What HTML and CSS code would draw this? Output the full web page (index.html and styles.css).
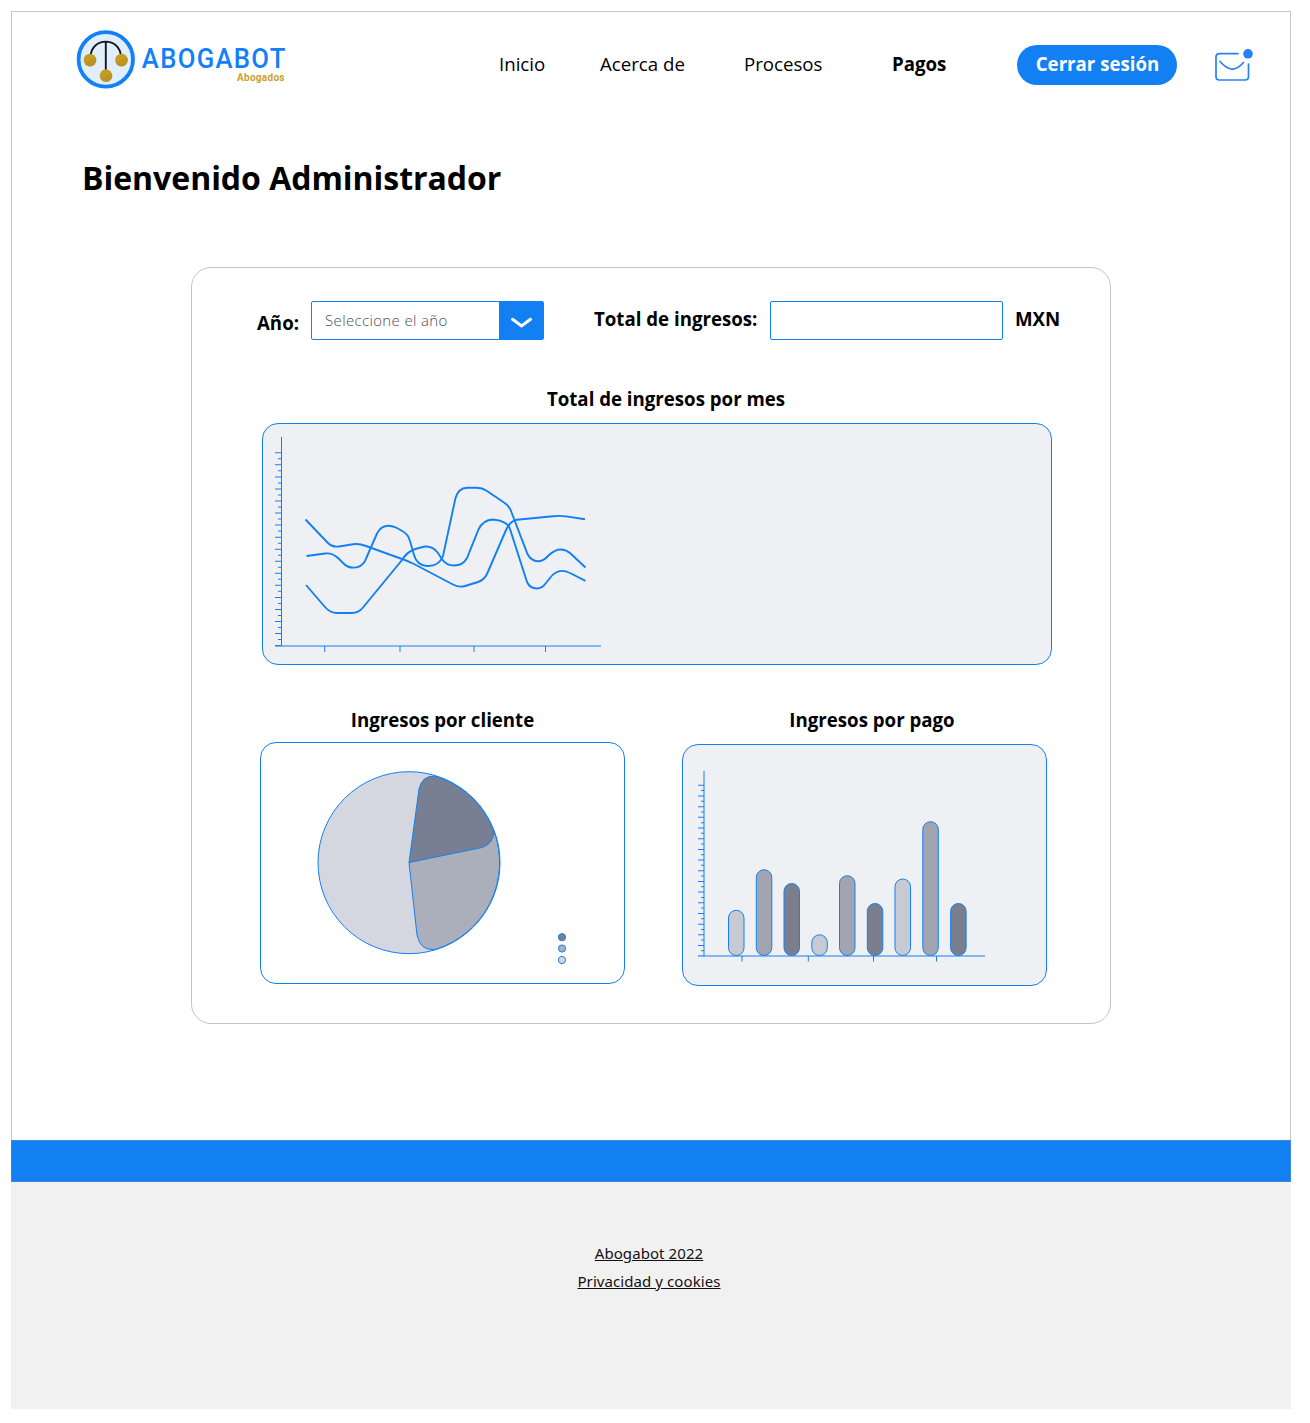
FILE: index.html
```html
<!DOCTYPE html>
<html lang="es">
<head>
<meta charset="utf-8">
<title>Abogabot - Pagos</title>
<link rel="stylesheet" href="styles.css">
</head>
<body>
<div class="page">
  <header class="header">
    <svg class="logo" viewBox="76 30 212 60" width="212" height="60" role="img" aria-label="Abogabot">
      <circle cx="105.8" cy="59.4" r="27.2" fill="#e1effd" stroke="#1280f8" stroke-width="3.8"/>
      <path d="M90.5 57C91 36.500 120.500 36.500 121 57M105.800 42V70" fill="none" stroke="#17191d" stroke-width="1.900"/>
      <g fill="#c49d22"><circle cx="90" cy="60" r="6.300"/><circle cx="121.500" cy="60" r="6.300"/><circle cx="106" cy="75.600" r="6.300"/></g>
      <g fill="#b38e24" opacity=".55"><path d="M84 62.500L96 58A6.300 6.300 0 0 1 84 62.500M115.500 62.500L127.500 58A6.300 6.300 0 0 1 115.500 62.500M100 78L112 73.500A6.300 6.300 0 0 1 100 78"/></g>
      <text class="logo-name" transform="translate(141.800 68.300) scale(.9 1)" textLength="159.500" lengthAdjust="spacing">ABOGABOT</text>
      <text class="logo-sub" x="237" y="81.300" textLength="47.500" lengthAdjust="spacing">Abogados</text>
    </svg>
    <a class="nav-link inicio">Inicio</a>
    <a class="nav-link acerca">Acerca de</a>
    <a class="nav-link procesos">Procesos</a>
    <a class="nav-link active">Pagos</a>
    <button class="logout">Cerrar sesión</button>
    <svg class="mail" viewBox="1214 46 40 38" width="40" height="38" fill="none" stroke="#2680fb" stroke-width="1.700" stroke-linecap="round">
      <path d="M1238 53.700H1219.500Q1216 53.700 1216 57.200V76.500Q1216 80 1219.500 80H1245Q1248.500 80 1248.500 76.500V64M1220 61.500C1229 71.500 1235.500 71.500 1243.500 62.500"/>
      <circle cx="1248" cy="53.800" r="4.800" fill="#2680fb" stroke="none"/>
    </svg>
  </header>

  <h1 class="title">Bienvenido Administrador</h1>

  <main class="card">
    <div class="filters">
      <label class="label year">Año:</label>
      <div class="select">
        <span class="placeholder">Seleccione el año</span>
        <span class="select-button">
          <svg width="24" height="14" viewBox="0 0 24 14" fill="none" stroke="#fff" stroke-width="3" stroke-linecap="round"><path d="M3.500 3.300L12.500 10L21.500 3.300"/></svg>
        </span>
      </div>
      <label class="label total">Total de ingresos:</label>
      <div class="field"></div>
      <span class="label">MXN</span>
    </div>

    <section class="monthly">
      <h2 class="label heading">Total de ingresos por mes</h2>
      <div class="panel shaded">
        <svg viewBox="263 424 788 240" width="788" height="240" fill="none" stroke="#1280f3">
          <path d="M281.500 437V646M275 646H601"/>
          <path d="M278.250 452.300V646" stroke-width="6.500" stroke-dasharray="1 11.050"/>
          <path d="M279.800 458.300V646" stroke-width="3.500" stroke-dasharray="1 11.050"/>
          <path d="M324.700 646V652M400 646V652M474 646V652M545.500 646V652"/>
          <g stroke-width="1.900">
            <path d="M305.500 519.500L327 542Q332 547.500 339 546.500L353 544.300Q359 543.300 366 546L402 559Q408 561 414 564L452 584Q459 588 465 586L478 582Q484 580 487 574L506 530Q510 521 517 519.800L553 516.300Q560 515.500 566 516.400L585 519.300"/>
            <path d="M306.500 556L325 553.500Q332 552.500 338 558L343 563C349 569.500 360 569.500 365 561L377 533.500Q381 525.500 389 525.700Q393 526 397 528L403 531.500Q408 534 410 541L414 555Q417 565.500 427 566Q439 566.500 443 556L455.500 498Q458.500 488 467 487.700H475Q482 487.500 487 491L504 502.500Q509 505.500 511 511L527.500 554Q531 561 538 561.300Q543 561 547 557L549 555Q560 545 570 553L585.500 567.500"/>
            <path d="M306 585L325 607Q330 613 337 613H352Q358.500 613 363 607.500L402 560Q407 552 414 549.500Q420 547.500 425 546.500Q433 546 438 553L441.500 558.500Q446 565.500 454 565.500Q463 565.500 467 558L478.500 529.500Q483 519.800 493 519.500Q508 521 510 529L527 582Q530 588.500 537 588.500Q542 588.500 546 583L550 578Q558 567 570 573L585.500 580.800"/>
          </g>
        </svg>
      </div>
    </section>

    <div class="charts">
      <section>
        <h2 class="label heading">Ingresos por cliente</h2>
        <div class="panel">
          <svg viewBox="261 743 363 240" width="363" height="240" stroke="#1280f3">
            <circle cx="409" cy="862.700" r="91" fill="#d4d7df" stroke="none"/>
            <path d="M409 862.500L417 935Q420 951 435 949.500A91 91 0 0 0 494 831Z" fill="#abafbb"/>
            <path d="M409 862.500L419 789Q422 775.500 435 776A91 91 0 0 1 494 832Q493 844 482 847.500Z" fill="#797f92"/>
            <circle cx="409" cy="862.700" r="91" fill="none"/>
            <circle cx="562" cy="937.200" r="3.600" fill="#797f92"/><circle cx="562" cy="948.500" r="3.600" fill="#abafbb"/><circle cx="562" cy="960" r="3.600" fill="#d4d7df"/>
          </svg>
        </div>
      </section>
      <section class="payments">
        <h2 class="label heading">Ingresos por pago</h2>
        <div class="panel shaded">
          <svg viewBox="683 745 363 240" width="363" height="240" fill="none" stroke="#1280f3">
            <path d="M704 771V956M698 956H985"/>
            <path d="M701 784.800V956" stroke-width="6" stroke-dasharray="1 9.680"/>
            <path d="M702.500 790.100V956" stroke-width="3" stroke-dasharray="1 9.680"/>
            <path d="M742 956V961.500M808.300 956V961.500M873.500 956V961.500M936.500 956V961.500"/>
            <g fill="#c8cad3"><rect x="728.500" y="910.300" width="15.500" height="45.200" rx="7.750"/><rect x="811.800" y="934.800" width="15.500" height="20.700" rx="7.750"/><rect x="895" y="879" width="15.500" height="76.500" rx="7.750"/></g>
            <g fill="#a2a5b1"><rect x="756.300" y="869.700" width="15.500" height="85.800" rx="7.750"/><rect x="839.500" y="875.700" width="15.500" height="79.800" rx="7.750"/><rect x="922.800" y="821.700" width="15.500" height="133.800" rx="7.750"/></g>
            <g fill="#7b7f8d"><rect x="784" y="883.500" width="15.500" height="72" rx="7.750"/><rect x="867.300" y="903.500" width="15.500" height="52" rx="7.750"/><rect x="950.600" y="903.500" width="15.500" height="52" rx="7.750"/></g>
          </svg>
        </div>
      </section>
    </div>
  </main>
  <div class="band"></div>
</div>
<footer class="footer">
  <a class="footer-link">Abogabot 2022</a>
  <a class="footer-link cookies">Privacidad y cookies</a>
</footer>
</body>
</html>
```
FILE: styles.css
```css
* { box-sizing: border-box; }

body {
  margin: 0;
  padding: 11px 19px 14px 11px;
  height: 1423px;
  background: #fff;
  color: #000;
  font-family: "Open Sans", sans-serif;
}

.page {
  height: 1171px;
  border: 1px solid #c8c8c8;
  border-bottom: 0;
  display: flex;
  flex-direction: column;
}

.header {
  display: grid;
  grid-template-columns: 422px 101px 144px 148px 125px 198px 40px;
  align-items: center;
  height: 88px;
  padding: 18px 0 0 64px;
}

.logo {
  display: block;
  align-self: start;
}

.logo-name {
  font-family: Roboto, sans-serif;
  font-size: 28.5px;
  font-weight: 500;
  fill: #1280f8;
}

.logo-sub {
  font-family: Roboto, sans-serif;
  font-size: 10px;
  font-weight: 700;
  fill: #c9a12b;
}

.nav-link {
  padding-left: 1px;
  font-size: 18.67px;
  line-height: 26px;
  white-space: nowrap;
  margin-bottom: 2px;
}

.active { font-weight: 700; }

.logout {
  width: 160px;
  height: 40px;
  margin-left: 1px;
  padding: 0 0 3px 1px;
  border: 0;
  border-radius: 20px;
  background: #1280f3;
  color: #fff;
  font: 700 18.67px "Open Sans", sans-serif;
  white-space: nowrap;
}

.mail { display: block; }

.title {
  margin: 56px 0 0 70px;
  font-size: 32px;
  line-height: 44px;
  font-weight: 700;
  letter-spacing: -0.03px;
}

.card {
  width: 920px;
  height: 757px;
  margin: 67px 0 0 179px;
  border: 1px solid #c4c4c4;
  border-radius: 20px;
}

.label {
  margin: 0;
  font-size: 18.67px;
  line-height: 26px;
  font-weight: 700;
  white-space: nowrap;
}

.filters {
  display: grid;
  grid-template-columns: 54px 283px 176px 245px auto;
  padding: 33px 0 0 65px;
}

.filters .label { margin-top: 5px; }
.filters .year { margin-top: 9px; }

.select {
  display: flex;
  justify-content: space-between;
  width: 233px;
  height: 39px;
  border: 1px solid #1280f3;
  border-radius: 2px;
}

.placeholder {
  padding-left: 13px;
  color: #4c4c58;
  font-size: 15px;
  font-weight: 300;
  letter-spacing: 0.36px;
  line-height: 37px;
}

.select-button {
  display: flex;
  align-items: center;
  justify-content: center;
  width: 44px;
  padding-top: 4px;
  background: #1280f3;
}

.field {
  width: 233px;
  height: 39px;
  border: 1px solid #1280f3;
  border-radius: 2px;
}

.monthly {
  width: 790px;
  margin: 46px 0 0 70px;
}

.monthly .heading { padding-left: 18px; }

.heading {
  margin-bottom: 11px;
  text-align: center;
}

.panel {
  height: 242px;
  border: 1px solid #1280f3;
  border-radius: 16px;
  overflow: hidden;
}

.panel svg { display: block; }
.shaded { background: #eff0f4; }

.charts {
  display: grid;
  grid-template-columns: 365px 365px;
  gap: 57px;
  margin: 42px 0 0 68px;
}

.charts .heading { margin-bottom: 9px; }
.payments .heading {
  margin-bottom: 11px;
  padding-left: 15px;
}
.charts .heading { margin-top: -0.5px; }
.charts .panel { margin-top: 0.5px; }

.band {
  height: 42px;
  margin: auto -1px 0;
  border: 1px solid #3f87d8;
  background: #1280f3;
}

.footer {
  display: flex;
  flex-direction: column;
  align-items: center;
  height: 227px;
  padding: 60px 4px 0 0;
  background: #f1f1f1;
}

.footer-link {
  font-family: "Noto Sans", sans-serif;
  font-size: 15px;
  line-height: 22px;
  letter-spacing: 0.08px;
  color: #111;
  text-decoration: underline;
  text-underline-offset: 1px;
}

.cookies { margin-top: 6px; }
```
